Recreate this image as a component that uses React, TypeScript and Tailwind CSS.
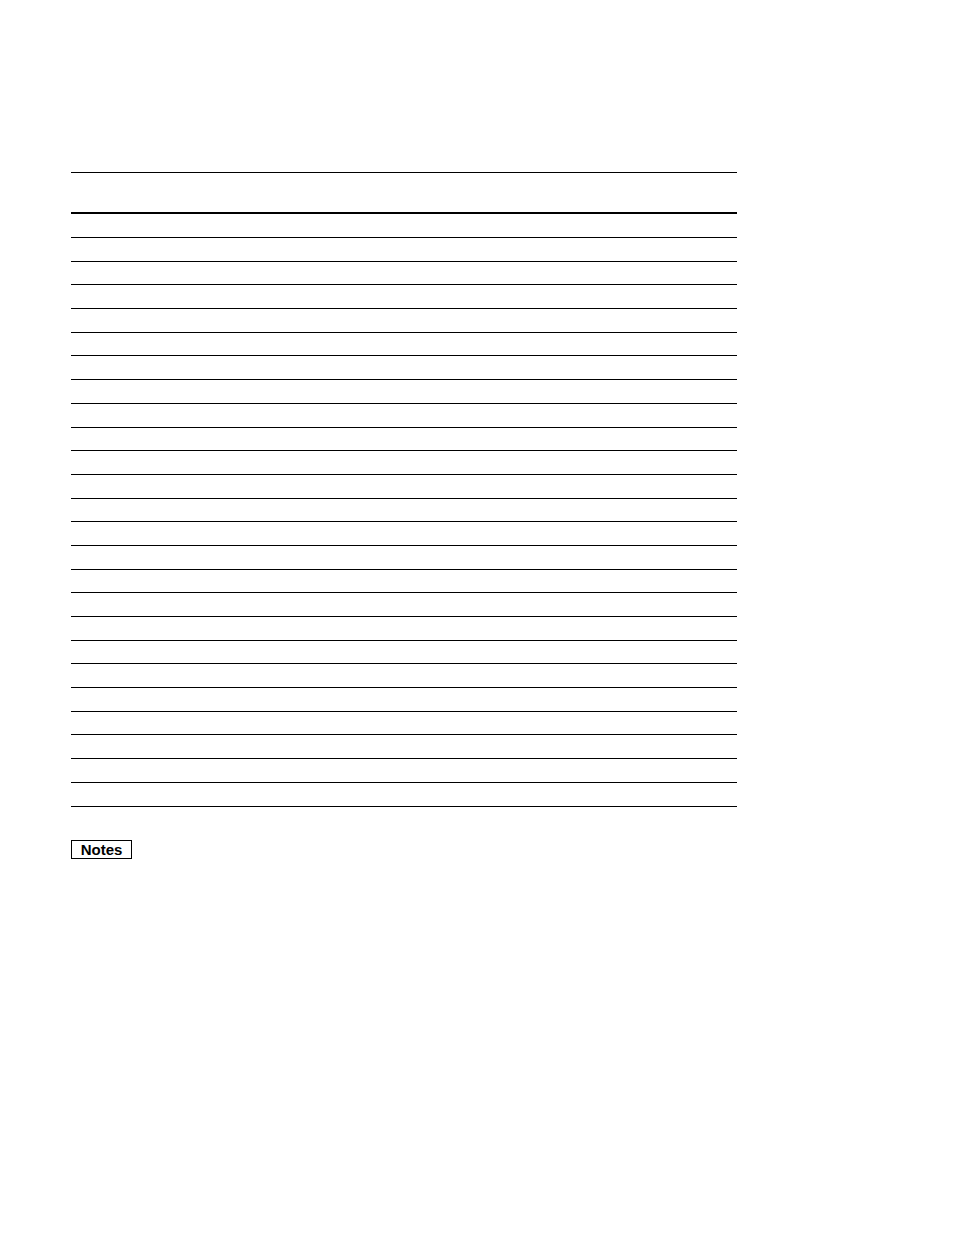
const ROWS = Array.from({ length: 25 }, (_, i) => i);

export default function App() {
  return (
    <div className="min-h-[1244px] bg-white pl-[71px] pt-[172px] font-['Liberation_Sans',Arial,sans-serif] text-black">
      <div className="w-[666px]">
        <div className="h-[42px] border-t border-b-2 border-black" />
        {ROWS.map((i) => (
          <div
            key={i}
            className={`${i === 0 ? "h-[24px]" : "h-[23.7px]"} border-b border-black`}
          />
        ))}
      </div>

      <div className="mt-[33px] flex h-[19px] w-[61px] items-center justify-center border border-black text-[15px] font-bold leading-none">
        Notes
      </div>
    </div>
  );
}
